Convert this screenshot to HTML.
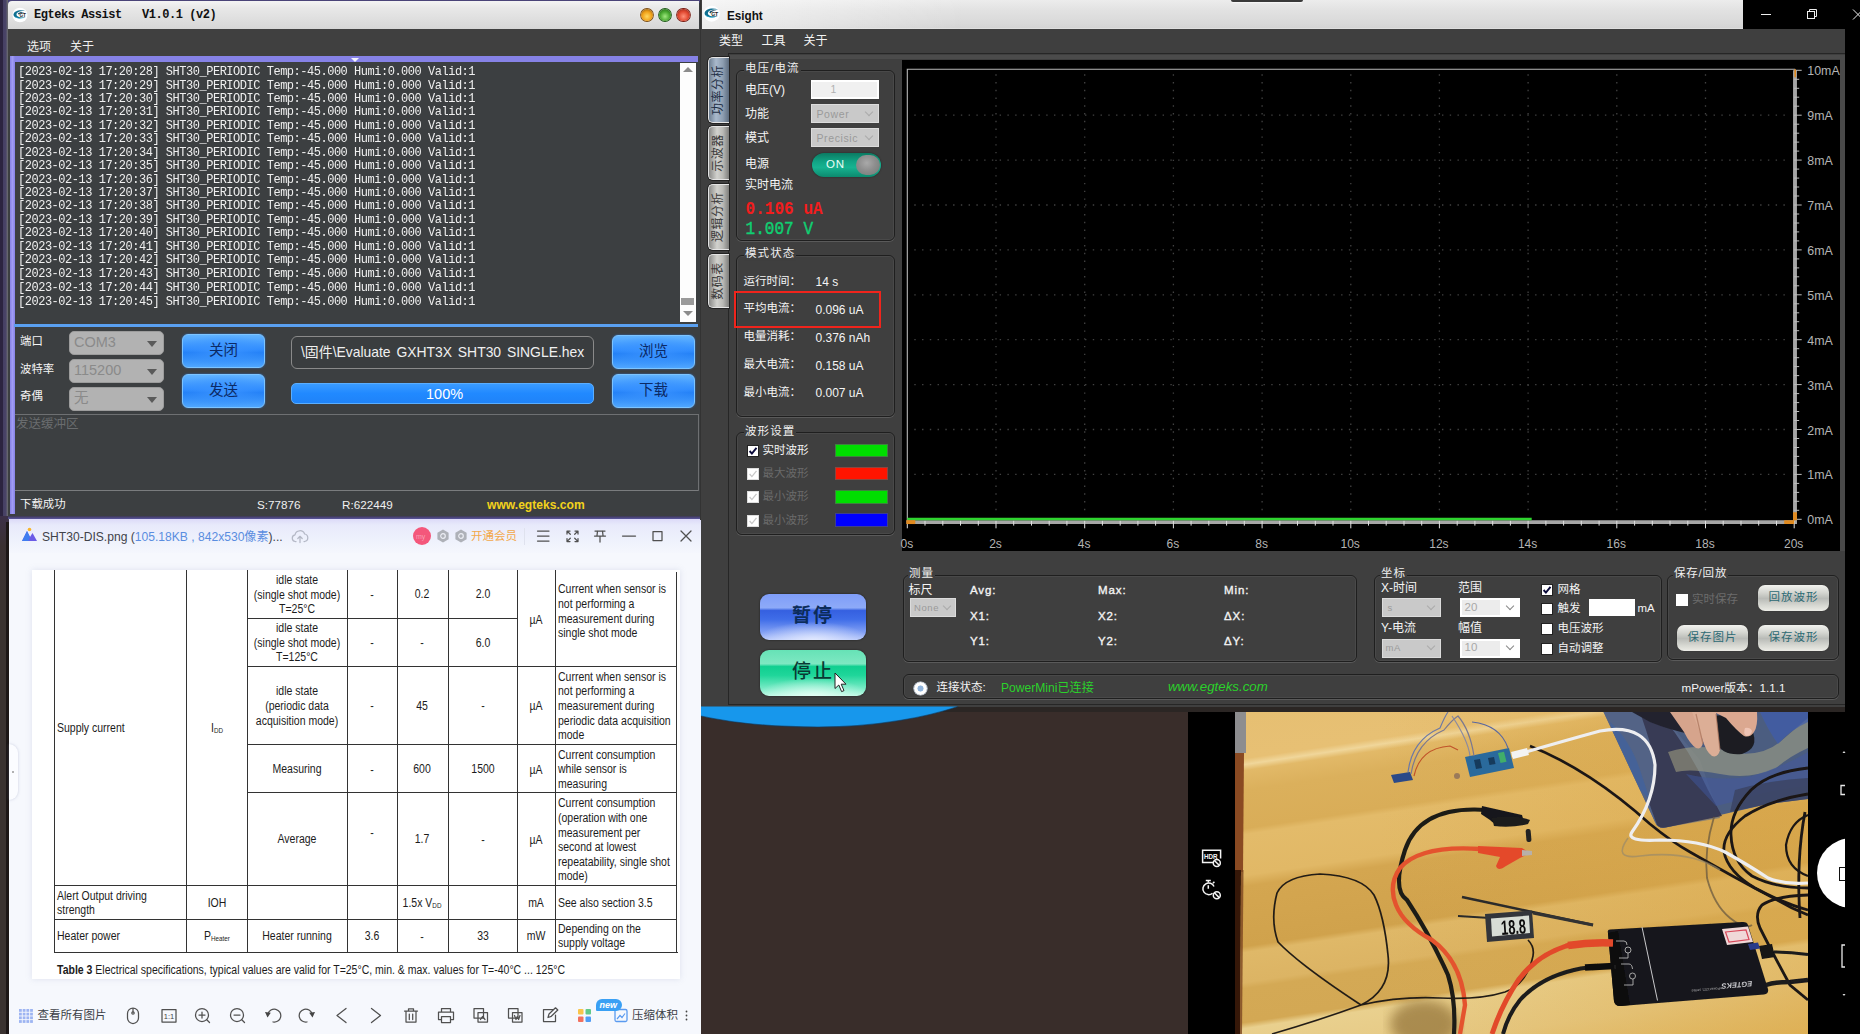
<!DOCTYPE html>
<html lang="zh"><head><meta charset="utf-8"><title>Egteks Esight</title>
<style>
*{box-sizing:border-box;margin:0;padding:0}
html,body{width:1860px;height:1034px;overflow:hidden;background:#000}
body{position:relative;font-family:"Liberation Sans","Noto Sans CJK SC",sans-serif;font-size:12px;color:#e8e8e8}
.a{position:absolute}
.t{position:absolute;white-space:nowrap;line-height:1;transform:translateY(-50%)}
.mono{font-family:"Liberation Mono","Noto Sans CJK SC",monospace}
svg{position:absolute;overflow:visible}
/* Egteks */
.cmb{position:absolute;background:#b2b2b2;border-radius:5px;color:#8a8a8a;font-size:14.5px;border:1px solid #9c9c9c}
.cmb span{position:absolute;left:4px;top:50%;transform:translateY(-52%);line-height:1}
.cmb i{position:absolute;right:6px;top:50%;margin-top:-2px;border:5px solid transparent;border-top:6px solid #5a5a5a;border-bottom:0}
.bbtn{position:absolute;border-radius:6px;border:1.5px solid #7cc4ff;color:#0b2a66;font-size:14.5px;text-align:center;
 background:radial-gradient(ellipse 60% 50% at 50% 50%,#3a93ff 0%,rgba(58,147,255,0) 100%),linear-gradient(180deg,#62b4ff 0%,#2f8cff 45%,#1f7df5 55%,#4fa6ff 100%);box-shadow:0 0 2px #2a6fd0}
.bbtn span{position:absolute;left:0;right:0;top:50%;transform:translateY(-54%);line-height:1}
/* Esight */
.gb{position:absolute;border:1.5px solid #1f1f1f;border-radius:6px;box-shadow:inset 0 0 0 0.5px #555, 0 1px 0 #5a5a5a}
.gt{position:absolute;white-space:nowrap;line-height:1;transform:translateY(-50%);background:#3f3f3f;padding:0 1px;color:#f0f0f0;font-size:11.5px;letter-spacing:1.1px}
.ecmb{position:absolute;background:#c9c9c9;border:1px solid #dcdcdc;color:#9a9a9a;font-size:10.5px}
.ecmb span{position:absolute;left:5px;top:50%;transform:translateY(-50%);line-height:1;letter-spacing:0.6px}
.ecmb b{position:absolute;right:6px;top:50%;width:6px;height:6px;margin-top:-5px;border-right:1px solid #aaa;border-bottom:1px solid #aaa;transform:rotate(45deg)}
.wcmb{position:absolute;background:#fff;border:1px solid #fff;color:#a8a8a8;font-size:11.5px}
.wcmb u{position:absolute;left:1px;top:1px;bottom:1px;width:38px;background:#ececec}
.wcmb span{position:absolute;left:4px;top:50%;transform:translateY(-56%);line-height:1;text-decoration:none}
.wcmb b{position:absolute;right:6px;top:50%;width:6px;height:6px;margin-top:-5px;border-right:1px solid #888;border-bottom:1px solid #888;transform:rotate(45deg)}
.ck{position:absolute;width:12px;height:12px;background:#fff;border:1px solid #222}
.ck.dis{border-color:#ddd}
.gbtn{position:absolute;border-radius:7px;color:#2d6a74;font-size:11.5px;text-align:center;letter-spacing:1px;
 background:linear-gradient(180deg,#f2f2ee 0%,#d4d5d0 30%,#b9bbb7 52%,#d8d9d3 80%,#ecece6 100%);box-shadow:0 0 1px #222}
.gbtn span{position:absolute;left:0;right:0;top:50%;transform:translateY(-55%);line-height:1}
</style></head><body>

<!-- p1_egteks -->
<div class="a" style="left:0;top:0;width:9px;height:520px;background:linear-gradient(90deg,#2c2440 0,#2c2440 3px,#464064 3.5px,#4a4468 6.3px,#66666e 6.8px,#66666e 8px,#333 8.2px)"></div>
<div class="a" style="left:0;top:516px;width:9px;height:518px;background:linear-gradient(180deg,#3c3048 0,#3a3032 30px,#3a3230 80px)"></div><div class="a" style="left:6px;top:522px;width:3px;height:512px;background:#1c1616"></div>
<div class="a" style="left:8px;top:0;width:693px;height:520px;background:#3c3f41"></div><div class="a" style="left:8px;top:0;width:692px;height:3px;background:#4a4478"></div>
<div class="a" style="left:8px;top:1px;width:691px;height:28px;border-radius:4px 0 0 0;background:linear-gradient(180deg,#f4f4f4 0%,#e8e8e8 25%,#e0e0e0 60%,#d6d6d6 100%)"></div>
<svg style="left:12.2px;top:6.5px" width="16.5" height="16.5" viewBox="703 5 18 18"><ellipse cx="711.7" cy="13.7" rx="8.2" ry="8" fill="#fdfeff"/><path d="M718.2 9.6 C712 7 705 9.2 704.6 13.3 C704.6 17 711 19 717.8 15.9 C712 17.2 707.9 15.6 707.9 13.2 C707.9 10.6 712.5 9 718.2 9.6 Z" fill="#0f6f90"/><path d="M717 16.6 C711.5 18.9 706.2 17.2 705.2 14.6 C707.2 17 712 17.8 717 16.6 Z" fill="#38c8f0"/><path d="M709.2 12.2 C710.5 10.6 713.5 10 716.5 10.6 C713.8 10.9 711.5 11.6 710.6 13.4 Z" fill="#1a4f6e"/><text x="711.3" y="15.6" font-size="5.2" font-weight="700" fill="#1c1c22" font-family="Liberation Sans,sans-serif" letter-spacing="-0.3">GT</text></svg>
<div class="t mono" style="left:34px;top:14.5px;font-size:12px;font-weight:700;color:#111;letter-spacing:-0.45px;white-space:pre">Egteks Assist   V1.0.1 (v2)</div>
<div class="a" style="left:640.5px;top:8.8px;width:12.4px;height:12.4px;border-radius:50%;background:radial-gradient(circle at 50% 62%,#ffd860 0%,#f0a018 50%,#7a4a10 100%);box-shadow:0 0 0 0.9px #7a4a10, 0 0 2px 1px rgba(255,255,255,.6)"></div>
<div class="a" style="left:659.0px;top:8.8px;width:12.4px;height:12.4px;border-radius:50%;background:radial-gradient(circle at 50% 62%,#a0e880 0%,#48a830 50%,#1f5a18 100%);box-shadow:0 0 0 0.9px #1f5a18, 0 0 2px 1px rgba(255,255,255,.6)"></div>
<div class="a" style="left:677.4px;top:8.8px;width:12.4px;height:12.4px;border-radius:50%;background:radial-gradient(circle at 50% 62%,#ff9078 0%,#e04830 50%,#7a2018 100%);box-shadow:0 0 0 0.9px #7a2018, 0 0 2px 1px rgba(255,255,255,.6)"></div>
<div class="a" style="left:8px;top:29px;width:692px;height:489px;background:#3c3f41"></div><div class="a" style="left:8px;top:29px;width:692px;height:27px;background:#404040"></div>
<div class="t" style="left:27px;top:46.5px;font-size:12px;color:#f0f0f0">选项</div>
<div class="t" style="left:70px;top:46.5px;font-size:12px;color:#f0f0f0">关于</div>
<div class="a" style="left:10px;top:56px;width:688px;height:6px;background:#8682e6"></div>
<div class="a" style="left:10px;top:56px;width:4.6px;height:457.5px;background:linear-gradient(90deg,#8682e6,#a09cf4 50%,#8682e6)"></div>
<div class="a" style="left:351px;top:58px;width:0;height:0;border:4px solid transparent;border-top:4px solid #f4f4ff;border-bottom:0"></div>
<div class="a mono" style="left:18px;top:65.1px;font-size:12px;line-height:12.03px;letter-spacing:-0.48px;color:#f0f0f0;white-space:pre;transform-origin:0 0;transform:scaleY(1.12)">[2023-02-13 17:20:28] SHT30_PERIODIC Temp:-45.000 Humi:0.000 Valid:1
[2023-02-13 17:20:29] SHT30_PERIODIC Temp:-45.000 Humi:0.000 Valid:1
[2023-02-13 17:20:30] SHT30_PERIODIC Temp:-45.000 Humi:0.000 Valid:1
[2023-02-13 17:20:31] SHT30_PERIODIC Temp:-45.000 Humi:0.000 Valid:1
[2023-02-13 17:20:32] SHT30_PERIODIC Temp:-45.000 Humi:0.000 Valid:1
[2023-02-13 17:20:33] SHT30_PERIODIC Temp:-45.000 Humi:0.000 Valid:1
[2023-02-13 17:20:34] SHT30_PERIODIC Temp:-45.000 Humi:0.000 Valid:1
[2023-02-13 17:20:35] SHT30_PERIODIC Temp:-45.000 Humi:0.000 Valid:1
[2023-02-13 17:20:36] SHT30_PERIODIC Temp:-45.000 Humi:0.000 Valid:1
[2023-02-13 17:20:37] SHT30_PERIODIC Temp:-45.000 Humi:0.000 Valid:1
[2023-02-13 17:20:38] SHT30_PERIODIC Temp:-45.000 Humi:0.000 Valid:1
[2023-02-13 17:20:39] SHT30_PERIODIC Temp:-45.000 Humi:0.000 Valid:1
[2023-02-13 17:20:40] SHT30_PERIODIC Temp:-45.000 Humi:0.000 Valid:1
[2023-02-13 17:20:41] SHT30_PERIODIC Temp:-45.000 Humi:0.000 Valid:1
[2023-02-13 17:20:42] SHT30_PERIODIC Temp:-45.000 Humi:0.000 Valid:1
[2023-02-13 17:20:43] SHT30_PERIODIC Temp:-45.000 Humi:0.000 Valid:1
[2023-02-13 17:20:44] SHT30_PERIODIC Temp:-45.000 Humi:0.000 Valid:1
[2023-02-13 17:20:45] SHT30_PERIODIC Temp:-45.000 Humi:0.000 Valid:1</div>
<div class="a" style="left:679.5px;top:63px;width:16.5px;height:259px;background:#fdfdfd"></div>
<div class="a" style="left:682.5px;top:67px;width:0;height:0;border:5px solid transparent;border-bottom:5px solid #8c8c8c;border-top:0"></div>
<div class="a" style="left:681px;top:298px;width:13px;height:7px;background:#9a9a9a"></div>
<div class="a" style="left:682.5px;top:311px;width:0;height:0;border:5px solid transparent;border-top:5px solid #8c8c8c;border-bottom:0"></div>
<div class="a" style="left:14px;top:324px;width:684px;height:3px;background:#5aa0f0"></div>
<div class="t" style="left:20px;top:342px;font-size:11.4px;color:#f4f4f4">端口</div>
<div class="t" style="left:20px;top:369.5px;font-size:11.4px;color:#f4f4f4">波特率</div>
<div class="t" style="left:20px;top:396.5px;font-size:11.4px;color:#f4f4f4">奇偶</div>
<div class="cmb" style="left:69px;top:331px;width:95px;height:24px"><span>COM3</span><i></i></div>
<div class="cmb" style="left:69px;top:359px;width:95px;height:24px"><span>115200</span><i></i></div>
<div class="cmb" style="left:69px;top:386.5px;width:95px;height:24px"><span>无</span><i></i></div>
<div class="bbtn" style="left:182px;top:334px;width:83px;height:33.5px"><span>关闭</span></div>
<div class="bbtn" style="left:182px;top:374px;width:83px;height:33.5px"><span>发送</span></div>
<div class="bbtn" style="left:612px;top:335px;width:83px;height:33.5px"><span>浏览</span></div>
<div class="bbtn" style="left:612px;top:374px;width:83px;height:33.5px"><span>下载</span></div>
<div class="a" style="left:291px;top:336px;width:303px;height:33px;border:1px solid #8a8a8a;border-radius:6px;background:#3a3d3f"></div>
<div class="t" style="left:301px;top:352.5px;font-size:13.9px;color:#f0f0f0;word-spacing:2px">\固件\Evaluate GXHT3X SHT30 SINGLE.hex</div>
<div class="a" style="left:291px;top:382.5px;width:303px;height:21.5px;border-radius:5px;background:linear-gradient(180deg,#3a9bff,#2189ff 50%,#1f83f8);border:1px solid #5aaeff"></div>
<div class="t" style="left:426px;top:394px;font-size:14.5px;color:#fff">100%</div>
<div class="a" style="left:15px;top:414px;width:683px;height:1px;background:#6e7072"></div>
<div class="t" style="left:16px;top:423.5px;font-size:12.5px;color:#6a6d6f">发送缓冲区</div>
<div class="a" style="left:15px;top:490px;width:683px;height:1px;background:#7a7c7e"></div>
<div class="a" style="left:698px;top:414px;width:1px;height:77px;background:#6e7072"></div>
<div class="t" style="left:20px;top:504.5px;font-size:11.4px;color:#f4f4f4">下载成功</div>
<div class="t" style="left:257px;top:504.5px;font-size:11.7px;color:#f0f0f0">S:77876</div>
<div class="t" style="left:342px;top:504.5px;font-size:11.7px;color:#f0f0f0">R:622449</div>
<div class="t" style="left:487px;top:504.5px;font-size:12.1px;font-weight:700;color:#f2d21c">www.egteks.com</div>
<!-- p2_viewer -->
<style>
.tc{position:absolute;white-space:nowrap;line-height:1;font-size:12.5px;color:#1c1c1c;transform:translate(-50%,-50%) scaleX(.84)}
.tl{position:absolute;white-space:nowrap;line-height:1;font-size:12.5px;color:#1c1c1c;transform-origin:0 50%;transform:translateY(-50%) scaleX(.84)}
.vl{position:absolute;width:1px;background:#333}
.hl{position:absolute;height:1px;background:#333}
.ic{stroke:#505050;stroke-width:1.25;fill:none;stroke-linecap:round;stroke-linejoin:round}
</style>
<div class="a" style="left:9px;top:519px;width:692px;height:515px;background:#f6f8fd"></div>
<div class="a" style="left:9px;top:519px;width:692px;height:34px;background:linear-gradient(180deg,#dcdaf8 0%,#e8eafb 18%,#eef1fc 60%,#f5f7fd 100%)"></div>
<div class="a" style="left:8px;top:516px;width:692px;height:3px;background:linear-gradient(180deg,#3c3850,#5a55a0)"></div>
<svg style="left:21px;top:527px" width="17" height="16" viewBox="0 0 17 16"><path d="M1 14 L6 4 L9 10 L11.5 6 L16 14 Z" fill="#6b5be6"/><path d="M6 4 L9 10 L7.5 14 L1 14 Z" fill="#3f7df0"/><circle cx="8.5" cy="2.5" r="1.8" fill="#f9b52c"/></svg>
<div class="t" style="left:42px;top:536.5px;font-size:12.1px;color:#3f424a">SHT30-DIS.png (<span style="color:#5a8de0">105.18KB , 842x530像素</span>)...</div>
<svg style="left:291px;top:528px" width="18" height="16" viewBox="0 0 18 16"><path class="ic" style="stroke:#b4b8c6" d="M5 13.5 H4.2 A3.4 3.4 0 0 1 4 6.8 A5 5 0 0 1 13.6 6 A3.8 3.8 0 0 1 13.6 13.5 H13"/><path class="ic" style="stroke:#b4b8c6" d="M9 14.5 V8.5 M6.8 10.5 L9 8.3 L11.2 10.5"/></svg>
<div class="a" style="left:412.5px;top:526.5px;width:18.5px;height:18.5px;border-radius:50%;background:#f4577b"></div>
<div class="t" style="left:416px;top:536px;font-size:7px;color:#f9a0b4">my</div>
<svg style="left:436.3px;top:529px" width="14" height="14" viewBox="0 0 14 14"><path d="M7 0.5 L12.6 3.7 V10.3 L7 13.5 L1.4 10.3 V3.7 Z" fill="#aeb1b8"/><circle cx="7" cy="7" r="2.3" fill="none" stroke="#eceef4" stroke-width="1.2"/></svg>
<svg style="left:454.3px;top:529px" width="14" height="14" viewBox="0 0 14 14"><path d="M7 0.5 L12.6 3.7 V10.3 L7 13.5 L1.4 10.3 V3.7 Z" fill="#aeb1b8"/><circle cx="7" cy="7" r="2.3" fill="none" stroke="#eceef4" stroke-width="1.2"/></svg>
<div class="t" style="left:471px;top:536.5px;font-size:11.5px;color:#f3a84a">开通会员</div>
<div class="a" style="left:524px;top:528px;width:1px;height:17px;background:#dfe2ee"></div>
<svg style="left:535px;top:528px" width="160" height="18" viewBox="535 528 160 18"><path class="ic" d="M537.5 531 H549 M537.5 536 H549 M537.5 541 H549"/><path class="ic" d="M567 534 V531 H570 M575 531 H578 V534 M578 538.5 V541.5 H575 M570 541.5 H567 V538.5 M567.4 531.4 L570.3 534.3 M577.6 531.4 L574.7 534.3 M577.6 541.1 L574.7 538.2 M567.4 541.1 L570.3 538.2"/><path class="ic" d="M595 531 H605 M597.5 531 L597 535.5 M602.5 531 L603 535.5 M594.5 536 H605.5 M600 536 V542"/><path class="ic" d="M622.5 536 H635.5"/><rect class="ic" x="653" y="531.5" width="9" height="9"/><path class="ic" d="M681 531 L691 541 M691 531 L681 541"/></svg>
<div class="a" style="left:32px;top:569.5px;width:648px;height:409px;background:#fff;box-shadow:0 0 6px rgba(150,160,190,.25)"></div>
<div class="vl" style="left:54px;top:570px;height:383px"></div>
<div class="vl" style="left:186px;top:570px;height:383px"></div>
<div class="vl" style="left:247px;top:570px;height:383px"></div>
<div class="vl" style="left:347px;top:570px;height:383px"></div>
<div class="vl" style="left:397px;top:570px;height:383px"></div>
<div class="vl" style="left:448px;top:570px;height:383px"></div>
<div class="vl" style="left:517px;top:570px;height:383px"></div>
<div class="vl" style="left:555px;top:570px;height:383px"></div>
<div class="vl" style="left:676px;top:572px;height:381px"></div>
<div class="hl" style="left:247px;top:618px;width:271px"></div>
<div class="hl" style="left:247px;top:666px;width:430px"></div>
<div class="hl" style="left:247px;top:744px;width:430px"></div>
<div class="hl" style="left:247px;top:792px;width:430px"></div>
<div class="hl" style="left:55px;top:885px;width:622px"></div>
<div class="hl" style="left:55px;top:919px;width:622px"></div>
<div class="hl" style="left:55px;top:952px;width:623px"></div>
<div class="tl" style="left:56.5px;top:727.5px;">Supply current</div>
<div class="tc" style="left:216.5px;top:727.5px;">I<span style="font-size:7.5px;vertical-align:-1px">DD</span></div>
<div class="tl" style="left:56.5px;top:895.5px;">Alert Output driving</div>
<div class="tl" style="left:56.5px;top:910px;">strength</div>
<div class="tc" style="left:216.5px;top:902.5px;">IOH</div>
<div class="tl" style="left:56.5px;top:936.3px;">Heater power</div>
<div class="tc" style="left:216.5px;top:936.3px;">P<span style="font-size:7.5px;vertical-align:-1px">Heater</span></div>
<div class="tc" style="left:296.8px;top:580px;">idle state</div>
<div class="tc" style="left:296.8px;top:594.5px;">(single shot mode)</div>
<div class="tc" style="left:296.8px;top:608.8px;">T=25°C</div>
<div class="tc" style="left:296.8px;top:628px;">idle state</div>
<div class="tc" style="left:296.8px;top:642.5px;">(single shot mode)</div>
<div class="tc" style="left:296.8px;top:657px;">T=125°C</div>
<div class="tc" style="left:296.8px;top:691px;">idle state</div>
<div class="tc" style="left:296.8px;top:705.7px;">(periodic data</div>
<div class="tc" style="left:296.8px;top:720.5px;">acquisition mode)</div>
<div class="tc" style="left:296.8px;top:769.2px;">Measuring</div>
<div class="tc" style="left:296.8px;top:839.2px;">Average</div>
<div class="tc" style="left:296.8px;top:936.3px;">Heater running</div>
<div class="tc" style="left:372px;top:595px;">-</div>
<div class="tc" style="left:372px;top:643px;">-</div>
<div class="tc" style="left:372px;top:706px;">-</div>
<div class="tc" style="left:372px;top:770px;">-</div>
<div class="tc" style="left:372px;top:833px;">-</div>
<div class="tc" style="left:372px;top:936.3px;">3.6</div>
<div class="tc" style="left:422px;top:594.3px;">0.2</div>
<div class="tc" style="left:422px;top:643px;">-</div>
<div class="tc" style="left:422px;top:705.7px;">45</div>
<div class="tc" style="left:422px;top:769.2px;">600</div>
<div class="tc" style="left:422px;top:839.2px;">1.7</div>
<div class="tc" style="left:422px;top:902.5px;">1.5x V<span style="font-size:7.5px;vertical-align:-1px">DD</span></div>
<div class="tc" style="left:422px;top:937px;">-</div>
<div class="tc" style="left:482.5px;top:594.3px;">2.0</div>
<div class="tc" style="left:482.5px;top:642.5px;">6.0</div>
<div class="tc" style="left:482.5px;top:706px;">-</div>
<div class="tc" style="left:482.5px;top:769.2px;">1500</div>
<div class="tc" style="left:482.5px;top:840px;">-</div>
<div class="tc" style="left:482.5px;top:936.3px;">33</div>
<div class="tc" style="left:536.3px;top:619.5px;">µA</div>
<div class="tc" style="left:536.3px;top:705.7px;">µA</div>
<div class="tc" style="left:536.3px;top:770px;">µA</div>
<div class="tc" style="left:536.3px;top:840px;">µA</div>
<div class="tc" style="left:536.3px;top:902.5px;">mA</div>
<div class="tc" style="left:536.3px;top:936.3px;">mW</div>
<div class="tl" style="left:557.5px;top:589px;">Current when sensor is</div>
<div class="tl" style="left:557.5px;top:604px;">not performing a</div>
<div class="tl" style="left:557.5px;top:619px;">measurement during</div>
<div class="tl" style="left:557.5px;top:633.3px;">single shot mode</div>
<div class="tl" style="left:557.5px;top:676.7px;">Current when sensor is</div>
<div class="tl" style="left:557.5px;top:691.3px;">not performing a</div>
<div class="tl" style="left:557.5px;top:705.8px;">measurement during</div>
<div class="tl" style="left:557.5px;top:720.5px;">periodic data acquisition</div>
<div class="tl" style="left:557.5px;top:735px;">mode</div>
<div class="tl" style="left:557.5px;top:754.5px;">Current consumption</div>
<div class="tl" style="left:557.5px;top:769.2px;">while sensor is</div>
<div class="tl" style="left:557.5px;top:784px;">measuring</div>
<div class="tl" style="left:557.5px;top:803.2px;">Current consumption</div>
<div class="tl" style="left:557.5px;top:818px;">(operation with one</div>
<div class="tl" style="left:557.5px;top:832.5px;">measurement per</div>
<div class="tl" style="left:557.5px;top:847px;">second at lowest</div>
<div class="tl" style="left:557.5px;top:861.7px;">repeatability, single shot</div>
<div class="tl" style="left:557.5px;top:876.3px;">mode)</div>
<div class="tl" style="left:557.5px;top:902.5px;">See also section 3.5</div>
<div class="tl" style="left:557.5px;top:928.7px;">Depending on the</div>
<div class="tl" style="left:557.5px;top:943.2px;">supply voltage</div>
<div class="tl" style="left:57px;top:970px;"><b>Table 3</b> Electrical specifications, typical values are valid for T=25°C, min. &amp; max. values for T=-40°C ... 125°C</div>
<svg style="left:18px;top:1008px" width="16" height="16" viewBox="0 0 16 16"><g fill="#9db4f2"><rect x="1.0" y="1.0" width="2.8" height="2.8"/><rect x="1.0" y="4.7" width="2.8" height="2.8"/><rect x="1.0" y="8.4" width="2.8" height="2.8"/><rect x="1.0" y="12.100000000000001" width="2.8" height="2.8"/><rect x="4.7" y="1.0" width="2.8" height="2.8"/><rect x="4.7" y="4.7" width="2.8" height="2.8"/><rect x="4.7" y="8.4" width="2.8" height="2.8"/><rect x="4.7" y="12.100000000000001" width="2.8" height="2.8"/><rect x="8.4" y="1.0" width="2.8" height="2.8"/><rect x="8.4" y="4.7" width="2.8" height="2.8"/><rect x="8.4" y="8.4" width="2.8" height="2.8"/><rect x="8.4" y="12.100000000000001" width="2.8" height="2.8"/><rect x="12.100000000000001" y="1.0" width="2.8" height="2.8"/><rect x="12.100000000000001" y="4.7" width="2.8" height="2.8"/><rect x="12.100000000000001" y="8.4" width="2.8" height="2.8"/><rect x="12.100000000000001" y="12.100000000000001" width="2.8" height="2.8"/></g></svg>
<div class="t" style="left:37.5px;top:1016px;font-size:11.5px;color:#3c3f46">查看所有图片</div>
<svg style="left:120px;top:1004px" width="580" height="24" viewBox="120 1004 580 24"><rect class="ic" x="127.5" y="1008" width="11" height="15.5" rx="5.5"/><circle class="ic" cx="133" cy="1013" r="1.2"/><path class="ic" d="M133 1008.5 V1011.8"/><rect class="ic" x="162" y="1009.5" width="14" height="12.5"/><text x="169" y="1019.2" font-size="7.5" text-anchor="middle" fill="#444" font-family="Liberation Sans,sans-serif">1:1</text><circle class="ic" cx="202" cy="1015" r="6.5"/><path class="ic" d="M199 1015 H205 M202 1012 V1018 M206.8 1019.8 L209.5 1022.5"/><circle class="ic" cx="237" cy="1015" r="6.5"/><path class="ic" d="M234 1015 H240 M241.8 1019.8 L244.5 1022.5"/><path class="ic" d="M268 1014 A6.5 6.5 0 1 1 273 1022"/><path d="M265 1012 L270.8 1012.8 L267.5 1017.5 Z" fill="#444"/><path class="ic" d="M312 1014 A6.5 6.5 0 1 0 307 1022"/><path d="M315 1012 L309.2 1012.8 L312.5 1017.5 Z" fill="#444"/><path class="ic" d="M346 1008.5 L337 1015.5 L346 1022.5"/><path class="ic" d="M371.5 1008.5 L380.5 1015.5 L371.5 1022.5"/><path class="ic" d="M404.5 1011 H417.5 M408.5 1011 V1008.8 H413.5 V1011 M406 1011 V1022 H416 V1011 M409.3 1014 V1019.5 M412.7 1014 V1019.5"/><path class="ic" d="M441.5 1012 V1008.5 H450.5 V1012 M441.5 1019.5 H438.5 V1012 H453.5 V1019.5 H450.5 M441.5 1016.5 H450.5 V1022.5 H441.5 Z"/><rect class="ic" x="474" y="1008.5" width="9.5" height="9.5"/><rect class="ic" x="478" y="1012.5" width="9.5" height="9.5"/><path class="ic" d="M480.5 1019.5 L482.5 1016.5 L485 1019.5"/><rect class="ic" x="508.5" y="1008.5" width="9.5" height="9.5"/><rect class="ic" x="512.5" y="1012.5" width="9.5" height="9.5"/><path class="ic" d="M514.5 1015.5 L516 1019.5 L517.3 1016.5 L518.6 1019.5 L520 1015.5"/><path class="ic" d="M553 1009.5 H543.5 V1021.5 H555.5 V1015"/><path class="ic" d="M548 1017.5 L549 1014 L555.5 1007.8 L557.8 1010 L551.3 1016.3 Z"/><rect x="578" y="1009" width="5.5" height="5.5" rx="1" fill="#f9c54a"/><rect x="585.5" y="1009" width="5.5" height="5.5" rx="1" fill="#62c98a"/><rect x="578" y="1016.5" width="5.5" height="5.5" rx="1" fill="#f2705e"/><rect x="585.5" y="1016.5" width="5.5" height="5.5" rx="1" fill="#4f9cf5"/><rect x="615" y="1009.5" width="12" height="12" rx="1.5" fill="none" stroke="#5a9af0" stroke-width="1.3"/><path d="M617 1019 L620 1015.5 L622 1017.5 L625 1013.5" fill="none" stroke="#5a9af0" stroke-width="1.2"/><circle cx="686.5" cy="1011.5" r="0.9" fill="#444"/><circle cx="686.5" cy="1015.5" r="0.9" fill="#444"/><circle cx="686.5" cy="1019.5" r="0.9" fill="#444"/></svg>
<div class="a" style="left:596px;top:999px;width:26px;height:12px;border-radius:6px 6px 6px 1px;background:#3aa0f4"></div>
<div class="t" style="left:599.5px;top:1004.5px;font-size:9px;color:#fff;font-style:italic;font-weight:700">new</div>
<div class="t" style="left:632px;top:1016px;font-size:11.5px;color:#3c3f46">压缩体积</div>
<div class="a" style="left:9px;top:744px;width:9px;height:56px;border-radius:0 9px 9px 0;background:#fbfcff;box-shadow:0 0 3px rgba(120,130,170,.35)"></div><div class="a" style="left:12px;top:771px;width:2px;height:2px;border-radius:50%;background:#999"></div>
<!-- p3_esight -->
<div class="a" style="left:699.5px;top:0;width:2px;height:520px;background:#333"></div>
<div class="a" style="left:701px;top:0;width:1144px;height:707px;background:#3f3f3f"></div>
<div class="a" style="left:701.5px;top:0;width:1042.5px;height:29px;background:linear-gradient(90deg,rgba(255,255,255,.55) 0,rgba(255,255,255,0) 260px),linear-gradient(180deg,#ececec 0%,#e2e2e2 35%,#d9d9d9 80%,#d4d4d4 96%,#e6e6e6 100%)"></div>
<div class="a" style="left:1743px;top:0;width:117px;height:29px;background:#000"></div>
<div class="a" style="left:1230.5px;top:0;width:72.5px;height:1.9px;background:#3a3a3a;border-radius:0 0 2px 2px;box-shadow:0 1px 1.5px rgba(255,255,255,.7)"></div>
<svg style="left:703px;top:5px" width="18" height="18" viewBox="703 5 18 18"><ellipse cx="711.7" cy="13.7" rx="8.2" ry="8" fill="#fdfeff"/><path d="M718.2 9.6 C712 7 705 9.2 704.6 13.3 C704.6 17 711 19 717.8 15.9 C712 17.2 707.9 15.6 707.9 13.2 C707.9 10.6 712.5 9 718.2 9.6 Z" fill="#0f6f90"/><path d="M717 16.6 C711.5 18.9 706.2 17.2 705.2 14.6 C707.2 17 712 17.8 717 16.6 Z" fill="#38c8f0"/><path d="M709.2 12.2 C710.5 10.6 713.5 10 716.5 10.6 C713.8 10.9 711.5 11.6 710.6 13.4 Z" fill="#1a4f6e"/><text x="711.3" y="15.6" font-size="5.2" font-weight="700" fill="#1c1c22" font-family="Liberation Sans,sans-serif" letter-spacing="-0.3">GT</text></svg>
<div class="t" style="left:726.6px;top:14.7px;font-size:13px;font-weight:700;color:#111;transform-origin:0 50%;transform:translateY(-50%) scaleX(.9)">Esight</div>
<svg style="left:1750px;top:0" width="110" height="29" viewBox="1750 0 110 29"><path d="M1761 14.5 H1771" stroke="#eee" stroke-width="1"/><rect x="1807.5" y="11.5" width="7" height="7" fill="none" stroke="#eee" stroke-width="1"/><path d="M1809.5 11.5 V9.5 H1816.5 V16.5 H1814.5" fill="none" stroke="#eee" stroke-width="1"/><path d="M1853 9.5 L1863 19.5 M1863 9.5 L1853 19.5" stroke="#eee" stroke-width="1"/></svg>
<div class="t" style="left:719px;top:41px;font-size:12px;color:#f4f4f4">类型</div>
<div class="t" style="left:761.5px;top:41px;font-size:12px;color:#f4f4f4">工具</div>
<div class="t" style="left:803.5px;top:41px;font-size:12px;color:#f4f4f4">关于</div>
<div class="a" style="left:728px;top:53px;width:1117px;height:652px;border-left:1.5px solid #262626;border-top:1.5px solid #262626;border-bottom:1.5px solid #262626"></div>
<div class="a" style="left:730px;top:55px;width:1115px;height:3.5px;background:#4b4b4b"></div>
<div class="a" style="left:707.5px;top:57px;width:21px;height:65.5px;border-radius:5px 0 0 5px;background:linear-gradient(90deg,#6e7f92 0%,#a9b9cc 35%,#8c9db0 70%,#5d6c7e 100%);border:1px solid #e4e4e4;border-right:0;box-shadow:0 0 0 1px #222"></div>
<div class="a" style="left:718px;top:89.75px;width:0;height:0"><div style="position:absolute;white-space:nowrap;line-height:1;font-size:12px;color:#1f2f45;transform:translate(-50%,-50%) rotate(-90deg);letter-spacing:0.5px">功率分析</div></div>
<div class="a" style="left:707.5px;top:126px;width:21px;height:54px;border-radius:5px 0 0 5px;background:linear-gradient(90deg,#8a8a88 0%,#d2d2ce 40%,#b9b9b5 70%,#7d7d7b 100%);border:1px solid #e4e4e4;border-right:0;box-shadow:0 0 0 1px #222"></div>
<div class="a" style="left:718px;top:153.0px;width:0;height:0"><div style="position:absolute;white-space:nowrap;line-height:1;font-size:12px;color:#3a3a3a;transform:translate(-50%,-50%) rotate(-90deg);letter-spacing:0.5px">示波器</div></div>
<div class="a" style="left:707.5px;top:184px;width:21px;height:66px;border-radius:5px 0 0 5px;background:linear-gradient(90deg,#8a8a88 0%,#d2d2ce 40%,#b9b9b5 70%,#7d7d7b 100%);border:1px solid #e4e4e4;border-right:0;box-shadow:0 0 0 1px #222"></div>
<div class="a" style="left:718px;top:217.0px;width:0;height:0"><div style="position:absolute;white-space:nowrap;line-height:1;font-size:12px;color:#3a3a3a;transform:translate(-50%,-50%) rotate(-90deg);letter-spacing:0.5px">逻辑分析</div></div>
<div class="a" style="left:707.5px;top:253.5px;width:21px;height:54.0px;border-radius:5px 0 0 5px;background:linear-gradient(90deg,#8a8a88 0%,#d2d2ce 40%,#b9b9b5 70%,#7d7d7b 100%);border:1px solid #e4e4e4;border-right:0;box-shadow:0 0 0 1px #222"></div>
<div class="a" style="left:718px;top:280.5px;width:0;height:0"><div style="position:absolute;white-space:nowrap;line-height:1;font-size:12px;color:#3a3a3a;transform:translate(-50%,-50%) rotate(-90deg);letter-spacing:0.5px">数码表</div></div>
<div class="gb" style="left:735.5px;top:69.5px;width:159px;height:171px"></div>
<div class="gt" style="left:744px;top:69px">电压/电流</div>
<div class="t" style="left:745px;top:90px;font-size:12px;color:#f4f4f4">电压(V)</div>
<div class="t" style="left:745px;top:114px;font-size:12px;color:#f4f4f4">功能</div>
<div class="t" style="left:745px;top:138.3px;font-size:12px;color:#f4f4f4">模式</div>
<div class="t" style="left:745px;top:164px;font-size:12px;color:#f4f4f4">电源</div>
<div class="t" style="left:745px;top:185px;font-size:12px;color:#f4f4f4">实时电流</div>
<div class="a" style="left:810.5px;top:80px;width:68px;height:19px;background:#fff"></div><div class="a" style="left:812px;top:82px;width:65px;height:15px;background:#f0f0f0"></div>
<div class="t" style="left:830.5px;top:89px;font-size:10.5px;color:#b0b0b0">1</div>
<div class="ecmb" style="left:810.5px;top:104px;width:68px;height:19px"><span>Power</span><b></b></div>
<div class="ecmb" style="left:810.5px;top:128px;width:68px;height:19px"><span>Precisic</span><b></b></div>
<div class="a" style="left:811.5px;top:153px;width:69.5px;height:23.5px;border-radius:12px;background:linear-gradient(180deg,#0b7a62 0%,#11a384 35%,#17b391 60%,#0c8a6e 100%);box-shadow:0 0 1.5px #1a1a1a"></div>
<div class="a" style="left:856px;top:154.5px;width:24px;height:20.5px;border-radius:11px;background:radial-gradient(ellipse at 45% 40%,#a9a9a9 0%,#8e8e8e 45%,#6f7a76 100%)"></div>
<div class="t" style="left:826px;top:165px;font-size:11.5px;color:#eafff8;letter-spacing:0.8px">ON</div>
<div class="t mono" style="left:745.5px;top:209.5px;font-size:16px;font-weight:700;color:#f21d1d;letter-spacing:0.05px;white-space:pre;transform:translateY(-50%) scaleY(1.12)">0.106 uA</div>
<div class="t mono" style="left:745.5px;top:229.5px;font-size:16px;font-weight:400;color:#10cf72;letter-spacing:0.05px;white-space:pre;transform:translateY(-50%) scaleY(1.12);-webkit-text-stroke:0.4px #10cf72">1.007 V</div>
<div class="gb" style="left:735.5px;top:254.5px;width:159px;height:162.5px"></div>
<div class="gt" style="left:744px;top:254px">模式状态</div>
<div class="t" style="left:743.5px;top:281.8px;font-size:11.5px;color:#f4f4f4">运行时间：</div>
<div class="t" style="left:815.5px;top:282.2px;font-size:12px;color:#f4f4f4">14 s</div>
<div class="t" style="left:743.5px;top:309.3px;font-size:11.5px;color:#f4f4f4">平均电流：</div>
<div class="t" style="left:815.5px;top:309.7px;font-size:12px;color:#f4f4f4">0.096 uA</div>
<div class="t" style="left:743.5px;top:337.3px;font-size:11.5px;color:#f4f4f4">电量消耗：</div>
<div class="t" style="left:815.5px;top:337.7px;font-size:12px;color:#f4f4f4">0.376 nAh</div>
<div class="t" style="left:743.5px;top:365.3px;font-size:11.5px;color:#f4f4f4">最大电流：</div>
<div class="t" style="left:815.5px;top:365.7px;font-size:12px;color:#f4f4f4">0.158 uA</div>
<div class="t" style="left:743.5px;top:392.8px;font-size:11.5px;color:#f4f4f4">最小电流：</div>
<div class="t" style="left:815.5px;top:393.2px;font-size:12px;color:#f4f4f4">0.007 uA</div>
<div class="a" style="left:733.5px;top:291px;width:147.5px;height:37px;border:2.6px solid #f0241c"></div>
<div class="gb" style="left:735.5px;top:432px;width:159px;height:102.5px"></div>
<div class="gt" style="left:744px;top:431.5px">波形设置</div>
<div class="ck" style="left:746.5px;top:445px"></div>
<svg style="left:746.5px;top:445px" width="12" height="12" viewBox="0 0 12 12"><path d="M2.6 6 L4.9 8.6 L9.5 2.8" fill="none" stroke="#0a0a3a" stroke-width="1.9"/></svg>
<div class="t" style="left:762.5px;top:451px;font-size:11.5px;color:#f4f4f4">实时波形</div>
<div class="a" style="left:834.5px;top:443.7px;width:53px;height:13.5px;background:#00de00;border:1px solid rgba(90,90,90,.7)"></div>
<div class="ck dis" style="left:746.5px;top:468.2px"></div>
<svg style="left:746.5px;top:468.2px" width="12" height="12" viewBox="0 0 12 12"><path d="M2.6 6 L4.9 8.6 L9.5 2.8" fill="none" stroke="#c8c8c8" stroke-width="1.3"/></svg>
<div class="t" style="left:762.5px;top:474.2px;font-size:11.5px;color:#6a6a6a">最大波形</div>
<div class="a" style="left:834.5px;top:466.9px;width:53px;height:13.5px;background:#ff1400;border:1px solid rgba(90,90,90,.7)"></div>
<div class="ck dis" style="left:746.5px;top:491.3px"></div>
<svg style="left:746.5px;top:491.3px" width="12" height="12" viewBox="0 0 12 12"><path d="M2.6 6 L4.9 8.6 L9.5 2.8" fill="none" stroke="#c8c8c8" stroke-width="1.3"/></svg>
<div class="t" style="left:762.5px;top:497.3px;font-size:11.5px;color:#6a6a6a">最小波形</div>
<div class="a" style="left:834.5px;top:490.0px;width:53px;height:13.5px;background:#00de00;border:1px solid rgba(90,90,90,.7)"></div>
<div class="ck dis" style="left:746.5px;top:514.5px"></div>
<svg style="left:746.5px;top:514.5px" width="12" height="12" viewBox="0 0 12 12"><path d="M2.6 6 L4.9 8.6 L9.5 2.8" fill="none" stroke="#c8c8c8" stroke-width="1.3"/></svg>
<div class="t" style="left:762.5px;top:520.5px;font-size:11.5px;color:#6a6a6a">最小波形</div>
<div class="a" style="left:834.5px;top:513.2px;width:53px;height:13.5px;background:#0000ff;border:1px solid rgba(90,90,90,.7)"></div>
<div class="a" style="left:760px;top:594px;width:106px;height:46px;border-radius:9px;background:radial-gradient(ellipse 55% 45% at 50% 105%,#e6ecff 0%,rgba(230,236,255,0) 100%),linear-gradient(180deg,#7f9df8 0%,#8daaf8 30%,#3560e0 36%,#3f6de8 55%,#86a3f5 85%,#b4c6fb 100%);box-shadow:0 0 2px #1a1a1a"></div>
<div class="t" style="left:813px;top:615px;font-size:19px;font-weight:700;color:#0c2c5a;letter-spacing:2px;transform:translate(-50%,-50%)">暂停</div>
<div class="a" style="left:760px;top:650px;width:106px;height:46px;border-radius:9px;background:radial-gradient(ellipse 55% 45% at 50% 105%,#e8fff6 0%,rgba(232,255,246,0) 100%),linear-gradient(180deg,#66e2b6 0%,#7ee8c2 30%,#10cf90 36%,#1fd69a 55%,#7cecc8 85%,#b8f7e2 100%);box-shadow:0 0 2px #1a1a1a"></div>
<div class="t" style="left:813px;top:671px;font-size:19px;font-weight:500;color:#0a3a34;letter-spacing:2px;transform:translate(-50%,-50%)">停止</div>
<svg style="left:834px;top:672px" width="14" height="22" viewBox="0 0 14 22"><path d="M1 1 V16.5 L4.8 13 L7.6 19.6 L10 18.6 L7.2 12.2 H12 Z" fill="#fff" stroke="#222" stroke-width="1"/></svg>
<!-- p3b_plot -->
<div class="a" style="left:902px;top:60px;width:938px;height:490.5px;background:#000"></div>
<div class="a" style="left:1840px;top:55px;width:5px;height:496px;background:#4a4a4a"></div>
<svg style="left:0;top:0" width="1860" height="1034" viewBox="0 0 1860 1034"><g stroke="#424242" stroke-width="1.3" stroke-dasharray="1.4 6.36" fill="none"><path d="M996.0 74.3 V516.3"/><path d="M1084.7 74.3 V516.3"/><path d="M1173.4 74.3 V516.3"/><path d="M1262.1 74.3 V516.3"/><path d="M1350.8 74.3 V516.3"/><path d="M1439.4 74.3 V516.3"/><path d="M1528.1 74.3 V516.3"/><path d="M1616.8 74.3 V516.3"/><path d="M1705.5 74.3 V516.3"/><path d="M914.3 474.4 H1791.2"/><path d="M914.3 429.5 H1791.2"/><path d="M914.3 384.6 H1791.2"/><path d="M914.3 339.7 H1791.2"/><path d="M914.3 294.8 H1791.2"/><path d="M914.3 249.9 H1791.2"/><path d="M914.3 205.0 H1791.2"/><path d="M914.3 160.1 H1791.2"/><path d="M914.3 115.2 H1791.2"/></g><path d="M907.3 522.3 V69.3 H1795.2" fill="none" stroke="#b9b9b9" stroke-width="1.1"/><path d="M906.8 522.1 H1796.9" stroke="#a6a6a6" stroke-width="3.9"/><path d="M1795.0 70.3 V524.0" stroke="#a6a6a6" stroke-width="3.9"/><g stroke="#e0e0e0" stroke-width="1"><path d="M907.3 520.8 V528.3"/><path d="M925.0 520.8 V525.6"/><path d="M942.8 520.8 V525.6"/><path d="M960.5 520.8 V525.6"/><path d="M978.3 520.8 V525.6"/><path d="M996.0 520.8 V528.3"/><path d="M1013.7 520.8 V525.6"/><path d="M1031.5 520.8 V525.6"/><path d="M1049.2 520.8 V525.6"/><path d="M1066.9 520.8 V525.6"/><path d="M1084.7 520.8 V528.3"/><path d="M1102.4 520.8 V525.6"/><path d="M1120.2 520.8 V525.6"/><path d="M1137.9 520.8 V525.6"/><path d="M1155.6 520.8 V525.6"/><path d="M1173.4 520.8 V528.3"/><path d="M1191.1 520.8 V525.6"/><path d="M1208.8 520.8 V525.6"/><path d="M1226.6 520.8 V525.6"/><path d="M1244.3 520.8 V525.6"/><path d="M1262.1 520.8 V528.3"/><path d="M1279.8 520.8 V525.6"/><path d="M1297.5 520.8 V525.6"/><path d="M1315.3 520.8 V525.6"/><path d="M1333.0 520.8 V525.6"/><path d="M1350.8 520.8 V528.3"/><path d="M1368.5 520.8 V525.6"/><path d="M1386.2 520.8 V525.6"/><path d="M1404.0 520.8 V525.6"/><path d="M1421.7 520.8 V525.6"/><path d="M1439.4 520.8 V528.3"/><path d="M1457.2 520.8 V525.6"/><path d="M1474.9 520.8 V525.6"/><path d="M1492.7 520.8 V525.6"/><path d="M1510.4 520.8 V525.6"/><path d="M1528.1 520.8 V528.3"/><path d="M1545.9 520.8 V525.6"/><path d="M1563.6 520.8 V525.6"/><path d="M1581.3 520.8 V525.6"/><path d="M1599.1 520.8 V525.6"/><path d="M1616.8 520.8 V528.3"/><path d="M1634.6 520.8 V525.6"/><path d="M1652.3 520.8 V525.6"/><path d="M1670.0 520.8 V525.6"/><path d="M1687.8 520.8 V525.6"/><path d="M1705.5 520.8 V528.3"/><path d="M1723.2 520.8 V525.6"/><path d="M1741.0 520.8 V525.6"/><path d="M1758.7 520.8 V525.6"/><path d="M1776.5 520.8 V525.6"/><path d="M1794.2 520.8 V528.3"/></g><g stroke="#bdbdbd" stroke-width="1"><path d="M1794.2 519.3 H1801.7"/><path d="M1794.2 510.3 H1799.2"/><path d="M1794.2 501.3 H1799.2"/><path d="M1794.2 492.4 H1799.2"/><path d="M1794.2 483.4 H1799.2"/><path d="M1794.2 474.4 H1801.7"/><path d="M1794.2 465.4 H1799.2"/><path d="M1794.2 456.4 H1799.2"/><path d="M1794.2 447.5 H1799.2"/><path d="M1794.2 438.5 H1799.2"/><path d="M1794.2 429.5 H1801.7"/><path d="M1794.2 420.5 H1799.2"/><path d="M1794.2 411.5 H1799.2"/><path d="M1794.2 402.6 H1799.2"/><path d="M1794.2 393.6 H1799.2"/><path d="M1794.2 384.6 H1801.7"/><path d="M1794.2 375.6 H1799.2"/><path d="M1794.2 366.6 H1799.2"/><path d="M1794.2 357.7 H1799.2"/><path d="M1794.2 348.7 H1799.2"/><path d="M1794.2 339.7 H1801.7"/><path d="M1794.2 330.7 H1799.2"/><path d="M1794.2 321.7 H1799.2"/><path d="M1794.2 312.8 H1799.2"/><path d="M1794.2 303.8 H1799.2"/><path d="M1794.2 294.8 H1801.7"/><path d="M1794.2 285.8 H1799.2"/><path d="M1794.2 276.8 H1799.2"/><path d="M1794.2 267.9 H1799.2"/><path d="M1794.2 258.9 H1799.2"/><path d="M1794.2 249.9 H1801.7"/><path d="M1794.2 240.9 H1799.2"/><path d="M1794.2 231.9 H1799.2"/><path d="M1794.2 223.0 H1799.2"/><path d="M1794.2 214.0 H1799.2"/><path d="M1794.2 205.0 H1801.7"/><path d="M1794.2 196.0 H1799.2"/><path d="M1794.2 187.0 H1799.2"/><path d="M1794.2 178.1 H1799.2"/><path d="M1794.2 169.1 H1799.2"/><path d="M1794.2 160.1 H1801.7"/><path d="M1794.2 151.1 H1799.2"/><path d="M1794.2 142.1 H1799.2"/><path d="M1794.2 133.2 H1799.2"/><path d="M1794.2 124.2 H1799.2"/><path d="M1794.2 115.2 H1801.7"/><path d="M1794.2 106.2 H1799.2"/><path d="M1794.2 97.2 H1799.2"/><path d="M1794.2 88.3 H1799.2"/><path d="M1794.2 79.3 H1799.2"/><path d="M1794.2 70.3 H1801.7"/></g><path d="M907.3 519.0 H1531.7" stroke="#2fd42f" stroke-width="2.5"/><path d="M906.3 522.1 h9" stroke="#e08a20" stroke-width="3.9"/><path d="M1784.2 522.1 h10 M1795.0 512.3 v8" stroke="#e08a20" stroke-width="3.9" fill="none"/><path d="M1795.2 69.3 v8" stroke="#e08a20" stroke-width="1.6"/><g font-family="Liberation Sans,sans-serif" font-size="12" fill="#b4b4b4"><text x="906.8" y="548" text-anchor="middle">0s</text><text x="995.5" y="548" text-anchor="middle">2s</text><text x="1084.2" y="548" text-anchor="middle">4s</text><text x="1172.9" y="548" text-anchor="middle">6s</text><text x="1261.6" y="548" text-anchor="middle">8s</text><text x="1350.2" y="548" text-anchor="middle">10s</text><text x="1438.9" y="548" text-anchor="middle">12s</text><text x="1527.6" y="548" text-anchor="middle">14s</text><text x="1616.3" y="548" text-anchor="middle">16s</text><text x="1705.0" y="548" text-anchor="middle">18s</text><text x="1793.7" y="548" text-anchor="middle">20s</text><text x="1807.3" y="524.3" font-size="12.4">0mA</text><text x="1807.3" y="479.4" font-size="12.4">1mA</text><text x="1807.3" y="434.5" font-size="12.4">2mA</text><text x="1807.3" y="389.6" font-size="12.4">3mA</text><text x="1807.3" y="344.7" font-size="12.4">4mA</text><text x="1807.3" y="299.8" font-size="12.4">5mA</text><text x="1807.3" y="254.9" font-size="12.4">6mA</text><text x="1807.3" y="210.0" font-size="12.4">7mA</text><text x="1807.3" y="165.1" font-size="12.4">8mA</text><text x="1807.3" y="120.2" font-size="12.4">9mA</text><text x="1807.3" y="75.3" font-size="12.4">10mA</text></g></svg>
<div class="gb" style="left:903px;top:575px;width:454px;height:86.5px"></div>
<div class="gt" style="left:908px;top:574px">测量</div>
<div class="t" style="left:908.5px;top:590px;font-size:12px;color:#f4f4f4">标尺</div>
<div class="ecmb" style="left:910px;top:598px;width:46px;height:19px;font-size:9.5px"><span style="left:3px">None</span><b style="right:5px"></b></div>
<div class="t" style="left:970px;top:590.5px;font-size:11.5px;color:#f4f4f4;letter-spacing:0.9px;-webkit-text-stroke:0.35px #f4f4f4">Avg:</div>
<div class="t" style="left:970px;top:616.5px;font-size:11.5px;color:#f4f4f4;letter-spacing:0.9px;-webkit-text-stroke:0.35px #f4f4f4">X1:</div>
<div class="t" style="left:970px;top:642.3px;font-size:11.5px;color:#f4f4f4;letter-spacing:0.9px;-webkit-text-stroke:0.35px #f4f4f4">Y1:</div>
<div class="t" style="left:1098px;top:590.5px;font-size:11.5px;color:#f4f4f4;letter-spacing:0.9px;-webkit-text-stroke:0.35px #f4f4f4">Max:</div>
<div class="t" style="left:1098px;top:616.5px;font-size:11.5px;color:#f4f4f4;letter-spacing:0.9px;-webkit-text-stroke:0.35px #f4f4f4">X2:</div>
<div class="t" style="left:1098px;top:642.3px;font-size:11.5px;color:#f4f4f4;letter-spacing:0.9px;-webkit-text-stroke:0.35px #f4f4f4">Y2:</div>
<div class="t" style="left:1224px;top:590.5px;font-size:11.5px;color:#f4f4f4;letter-spacing:0.9px;-webkit-text-stroke:0.35px #f4f4f4">Min:</div>
<div class="t" style="left:1224px;top:616.5px;font-size:11.5px;color:#f4f4f4;letter-spacing:0.9px;-webkit-text-stroke:0.35px #f4f4f4">ΔX:</div>
<div class="t" style="left:1224px;top:642.3px;font-size:11.5px;color:#f4f4f4;letter-spacing:0.9px;-webkit-text-stroke:0.35px #f4f4f4">ΔY:</div>
<div class="gb" style="left:1374px;top:575px;width:287.5px;height:87px"></div>
<div class="gt" style="left:1380px;top:574px">坐标</div>
<div class="t" style="left:1381px;top:588.3px;font-size:12px;color:#f4f4f4">X-时间</div>
<div class="t" style="left:1381px;top:627.8px;font-size:12px;color:#f4f4f4">Y-电流</div>
<div class="t" style="left:1458px;top:588.3px;font-size:12px;color:#f4f4f4">范围</div>
<div class="t" style="left:1458px;top:627.8px;font-size:12px;color:#f4f4f4">幅值</div>
<div class="ecmb" style="left:1381.5px;top:598px;width:59.5px;height:19px;font-size:9.5px"><span>s</span><b></b></div>
<div class="ecmb" style="left:1381.5px;top:638.5px;width:59.5px;height:19px;font-size:9.5px"><span style="left:3px">mA</span><b></b></div>
<div class="wcmb" style="left:1459.5px;top:598px;width:60.5px;height:19px"><u></u><span>20</span><b></b></div>
<div class="wcmb" style="left:1459.5px;top:638.5px;width:60.5px;height:19px"><u></u><span>10</span><b></b></div>
<div class="ck" style="left:1541px;top:583.7px"></div>
<svg style="left:1541px;top:583.7px" width="12" height="12" viewBox="0 0 12 12"><path d="M2.6 6 L4.9 8.6 L9.5 2.8" fill="none" stroke="#0a0a3a" stroke-width="1.9"/></svg>
<div class="t" style="left:1557.5px;top:589.7px;font-size:11.5px;color:#f4f4f4">网格</div>
<div class="ck" style="left:1541px;top:602.8px"></div>
<div class="t" style="left:1557.5px;top:608.8px;font-size:11.5px;color:#f4f4f4">触发</div>
<div class="ck" style="left:1541px;top:622.8px"></div>
<div class="t" style="left:1557.5px;top:628.8px;font-size:11.5px;color:#f4f4f4">电压波形</div>
<div class="ck" style="left:1541px;top:643.2px"></div>
<div class="t" style="left:1557.5px;top:649.2px;font-size:11.5px;color:#f4f4f4">自动调整</div>
<div class="a" style="left:1589px;top:598.5px;width:46px;height:17.5px;background:#fff"></div>
<div class="t" style="left:1637.5px;top:608.5px;font-size:11.5px;color:#f4f4f4">mA</div>
<div class="gb" style="left:1666.5px;top:575px;width:172.5px;height:85px"></div>
<div class="gt" style="left:1673px;top:573.5px;letter-spacing:0.8px">保存/回放</div>
<div class="ck dis" style="left:1676px;top:593.5px;border-color:#fff"></div>
<div class="t" style="left:1692px;top:599.5px;font-size:11.5px;color:#6c6c6c">实时保存</div>
<div class="gbtn" style="left:1758px;top:585px;width:71px;height:26px"><span>回放波形</span></div>
<div class="gbtn" style="left:1677px;top:624.5px;width:71px;height:26px"><span>保存图片</span></div>
<div class="gbtn" style="left:1758px;top:624.5px;width:71px;height:26px"><span>保存波形</span></div>
<div class="gb" style="left:903px;top:673.5px;width:936px;height:25px"></div>
<div class="a" style="left:913.5px;top:681.5px;width:13px;height:13px;border-radius:50%;background:radial-gradient(circle,#8fb4dc 0%,#8fb4dc 30%,#fff 36%,#fff 100%);box-shadow:0 0 0 0.6px #cfe0f5"></div>
<div class="t" style="left:936.5px;top:688.3px;font-size:11.5px;color:#f4f4f4">连接状态:</div>
<div class="t" style="left:1001px;top:688.3px;font-size:12.1px;color:#2bd12b">PowerMini已连接</div>
<div class="t" style="left:1168px;top:686.5px;font-size:13.3px;color:#2bd12b;font-style:italic">www.egteks.com</div>
<div class="t" style="left:1681.5px;top:688.3px;font-size:11.7px;color:#f4f4f4">mPower版本：1.1.1</div>
<!-- p4_photo -->
<div class="a" style="left:701px;top:707px;width:488px;height:327px;background:#392d2a"></div>
<div class="a" style="left:701px;top:707px;width:1144px;height:5px;background:#2b2624"></div>
<svg style="left:0;top:0" width="1860" height="1034" viewBox="0 0 1860 1034"><path d="M701 706.5 H958 C930 716 880 727 818 727 C770 727 730 722.5 701 716 Z" fill="#1797ec"/><path d="M701 716 C730 722.5 770 727 818 727 C880 727 930 716 958 706.5" fill="none" stroke="#123a5e" stroke-width="1.2" opacity=".6"/></svg>
<div class="a" style="left:1188px;top:712px;width:672px;height:322px;background:#000"></div>
<div class="a" style="left:1845px;top:29px;width:15px;height:1005px;background:#000"></div>
<svg style="left:1200px;top:846px" width="24" height="56" viewBox="1200 846 24 56"><g fill="none" stroke="#f4f4f4" stroke-width="1.5"><path d="M1213 862.5 H1202.6 V850.2 H1220.6 V858.5"/><circle cx="1216.8" cy="862.9" r="3.5"/><path d="M1214.4 860.5 L1219.2 865.3"/><path d="M1212.5 893.2 A5.8 5.8 0 1 1 1214 886.5"/><path d="M1208.3 882.5 V880.8 M1205.8 880.6 H1210.8 M1208.3 885.2 V888.8 M1213 883.3 L1214.4 881.8"/><circle cx="1216.8" cy="895.2" r="3.5"/><path d="M1214.4 892.8 L1219.2 897.6"/></g><text x="1204" y="858.9" font-size="6.3" font-weight="700" fill="#f4f4f4" font-family="Liberation Sans,sans-serif">HDR</text></svg>
<div class="a" style="left:1816.5px;top:838px;width:28.5px;height:70px;overflow:hidden"><div style="position:absolute;left:0;top:0;width:70px;height:70px;border-radius:50%;background:radial-gradient(circle,#ffffff 0%,#ffffff 86%,#d8d8d8 92%,#f4f4f4 100%)"></div><div style="position:absolute;left:22.5px;top:28.5px;width:8px;height:14px;border:1.6px solid #111"></div></div>
<svg style="left:1836px;top:745px" width="10" height="260" viewBox="1836 745 10 260"><g fill="none" stroke="#e8e8e8" stroke-width="1.3"><path d="M1845 785.5 H1841 V794.5 H1845"/><path d="M1845 945 H1842 V967 H1845"/></g><path d="M1842.5 753 l1.5 -2 l1.5 2 Z M1842.5 994 l1.5 2 l1.5 -2 Z" fill="#ddd"/></svg>
<svg style="left:1235px;top:712px;overflow:hidden" width="573" height="322" viewBox="1235 712 573 322"><defs><linearGradient id="wood" gradientUnits="userSpaceOnUse" x1="1235" y1="712" x2="1294.8" y2="1111.0"><stop offset="0.0000" stop-color="#e6bf72"/><stop offset="0.1177" stop-color="#e7c074"/><stop offset="0.1324" stop-color="#f0d69a"/><stop offset="0.1471" stop-color="#e2b968"/><stop offset="0.1961" stop-color="#dbb05c"/><stop offset="0.2893" stop-color="#d9ad58"/><stop offset="0.3040" stop-color="#e3bb6a"/><stop offset="0.4045" stop-color="#e1b866"/><stop offset="0.4314" stop-color="#d4a650"/><stop offset="0.5785" stop-color="#d0a24c"/><stop offset="0.5932" stop-color="#dfb868"/><stop offset="0.6667" stop-color="#dcb464"/><stop offset="0.6815" stop-color="#d4a955"/><stop offset="0.7648" stop-color="#d3a854"/><stop offset="0.7795" stop-color="#e9d08e"/><stop offset="0.8825" stop-color="#e6c984"/><stop offset="1.0001" stop-color="#e0b862"/></linearGradient><radialGradient id="pad" cx="0.62" cy="0.45" r="0.6"><stop offset="0" stop-color="#77828a"/><stop offset="0.35" stop-color="#465a7a"/><stop offset="0.7" stop-color="#33425f"/><stop offset="1" stop-color="#2a3248"/></radialGradient><linearGradient id="warm" gradientUnits="userSpaceOnUse" x1="1380" y1="0" x2="1808" y2="0"><stop offset="0" stop-color="#dca848" stop-opacity="0"/><stop offset="1" stop-color="#dca848" stop-opacity=".5"/></linearGradient><filter id="bl"><feGaussianBlur stdDeviation="0.7"/></filter><filter id="bl2"><feGaussianBlur stdDeviation="6"/></filter></defs><rect x="1235" y="712" width="573" height="322" fill="url(#wood)"/><rect x="1235" y="712" width="573" height="322" fill="url(#warm)"/><rect x="1235" y="712" width="11" height="41" fill="#8d8d8f"/><path d="M1235 753 H1244 L1243 872 H1235 Z" fill="#8a4a22"/><path d="M1235 870 H1241 L1240 1034 H1235 Z" fill="#351708"/><path d="M1241 870 H1243.5 L1242 1034 H1240 Z" fill="#7a4520" opacity=".8"/><ellipse cx="1424" cy="1024" rx="34" ry="24" fill="#8a6a30" opacity=".65" filter="url(#bl2)"/><g filter="url(#bl)"><path d="M1603.5 712 H1808 V799 L1768 804 L1668 827 Q1658 830 1655 822 Z" fill="#4c5d80"/><path d="M1603.5 712 H1660 L1700 760 L1720 818 L1668 827 Q1658 830 1655 822 Z" fill="#56688a" opacity=".6"/><path d="M1640 712 L1662 716 Q1690 750 1708 790 L1722 816 L1668 827 Q1658 830 1656 822 L1648 800 Q1660 770 1646 730 Z" fill="#353650" opacity=".92"/><path d="M1668 752 Q1700 742 1730 752 Q1760 758 1780 742 Q1796 728 1808 718 V748 Q1790 756 1776 768 Q1750 780 1720 774 Q1690 768 1676 772 Z" fill="#a8a684" opacity=".55"/><path d="M1686 774 Q1720 782 1752 776 Q1785 766 1808 752 V786 Q1770 790 1740 800 L1716 806 Z" fill="#3f58a0" opacity=".5"/><path d="M1760 712 H1808 V722 Q1790 730 1778 744 Q1768 730 1760 712 Z" fill="#3f5cae" opacity=".7"/><path d="M1610 722 Q1630 740 1640 770 L1650 800 L1640 790 L1612 730 Z" fill="#3b62a8" opacity=".55"/><path d="M1735 790 Q1770 780 1808 778 V799 L1768 804 L1730 812 Z" fill="#3a4260" opacity=".8"/><path d="M1632 712 H1680 L1690 734 Q1670 730 1650 722 Z" fill="#23232e"/><path d="M1712 716 Q1740 712 1752 730 Q1760 748 1742 754 Q1722 756 1716 742 Z" fill="#1a1e24"/><path d="M1670 712 H1697 L1703 742 Q1702 750 1696 748 Q1690 744 1684 732 Z" fill="#d6a48c"/><path d="M1692 712 H1716 L1720 750 Q1718 758 1712 756 Q1706 752 1702 738 Z" fill="#dcae96"/><path d="M1714 712 H1757 Q1758 726 1754 732 Q1750 738 1744 736 Q1736 730 1726 718 Z" fill="#dba890"/><path d="M1745 728 q5 -1 7 3 q-1 5 -6 5 q-3 -3 -1 -8 Z" fill="#eec4b4"/><path d="M1696 714 L1703 744 M1716 714 L1720 750" stroke="#a87058" stroke-width="1.2" fill="none" opacity=".7"/><g fill="none" stroke="#1a1714" stroke-width="2.8"><path d="M1808 768 Q1770 772 1751 790 Q1730 812 1731 835 Q1732 862 1752 876 Q1775 888 1808 888"/><path d="M1808 794 Q1770 800 1745 816 Q1722 834 1724 852 Q1728 872 1755 888 Q1785 904 1808 910"/><path d="M1805 812 Q1796 860 1800 918"/><path d="M1808 895 Q1775 896 1762 905 Q1754 914 1760 928 Q1772 952 1790 985 L1808 1000"/><path d="M1808 815 Q1790 822 1786 845 Q1786 868 1808 876" stroke-width="2.2"/></g><path d="M1714 817 Q1704 850 1707 878 Q1714 905 1730 918 Q1745 930 1752 925" fill="none" stroke="#6a5a40" stroke-width="1.8" opacity=".75"/><path d="M1530 746 Q1590 770 1650 824 Q1672 842 1690 852 Q1735 878 1792 908 L1808 915" fill="none" stroke="#1b1714" stroke-width="2.6"/><path d="M1512 756 Q1560 742 1600 731 Q1650 722 1655 765 Q1655 800 1632 832 Q1625 842 1660 840 Q1700 840 1725 852 Q1750 866 1768 878 Q1785 885 1808 883" fill="none" stroke="#eeeef0" stroke-width="3.2"/><path d="M1628 838 Q1612 860 1640 856 Q1690 850 1720 870" fill="none" stroke="#9a8a6a" stroke-width="1.6" opacity=".7"/><path d="M1511 752 l16 -4 l2 7 l-16 4 Z" fill="#f3f3f3"/><path d="M1465 757 L1509 748 L1514 768 L1470 777 Z" fill="#2a6a9c"/><path d="M1474 760 l6 -1 l2 9 l-6 1 Z M1488 758 l6 -1 l1.5 7 l-6 1 Z" fill="#163a5c"/><path d="M1498 753 l6 -1.3 l2.5 10 l-6 1.3 Z" fill="#3fae6a"/><path d="M1391 775 L1410 772 L1413 780 L1394 783 Z" fill="#2a4a88"/><g fill="none" stroke-width="1.2"><path d="M1408 772 Q1412 740 1440 728 Q1445 716 1448 712" stroke="#6a78a8"/><path d="M1411 774 Q1416 742 1444 730 Q1452 720 1458 716 Q1470 730 1474 756" stroke="#7a7890"/><path d="M1414 776 Q1420 748 1450 746 L1458 750" stroke="#c0522a"/><path d="M1472 722 Q1500 725 1508 748" stroke="#5a68a0"/><path d="M1452 716 Q1468 740 1470 756" stroke="#8a8aa0"/></g><circle cx="1457" cy="776" r="3" fill="#9a7a5a"/><path d="M1487 810 Q1420 805 1405 850 Q1392 890 1407 900 Q1430 935 1448 975 Q1456 1000 1454 1034" fill="none" stroke="#1d1b18" stroke-width="4.2"/><path d="M1482 806 L1522 815 L1524 822 L1508 824 Q1495 826 1490 820 L1481 814 Z" fill="#18181a"/><path d="M1492 818 Q1515 814 1530 820 L1528 824 Q1512 828 1494 826 Z" fill="#1c1c1e"/><rect x="1526" y="829" width="5" height="13" rx="2" fill="#222" transform="rotate(-5 1528 835)"/><path d="M1480 849 Q1420 845 1400 868 Q1388 885 1396 905 Q1404 925 1432 940 Q1462 962 1465 1005 L1460 1034" fill="none" stroke="#e4532f" stroke-width="4.4"/><path d="M1478 846 L1522 848 L1530 853 L1520 858 L1506 866 Q1498 872 1496 866 L1500 857 L1478 853 Z" fill="#e44a2c"/><path d="M1522 850 l10 1 v4 l-10 1 Z" fill="#b8b0a8"/><path d="M1272 1034 Q1320 1020 1361 1005 Q1392 990 1388 955 Q1384 915 1374 895 Q1362 876 1320 874 Q1285 876 1277 893 Q1270 920 1278 942 Q1300 965 1361 1005 Q1400 996 1440 998 Q1480 1000 1505 992 Q1525 985 1532 960 Q1536 948 1528 940" fill="none" stroke="#231d16" stroke-width="1.7"/><path d="M1462 897 L1593 925" stroke="#2a2a2a" stroke-width="2.6"/><path d="M1458 916 L1490 918" stroke="#2a2a2a" stroke-width="2"/><path d="M1533 913 L1593 925" stroke="#333" stroke-width="3.2"/><path d="M1485 914 L1532 910.5 L1534 938 L1487 942 Z" fill="#33363a"/><path d="M1491 918.5 L1529 915.5 L1530 933 L1492 936.5 Z" fill="#d7ddd6"/><text x="1501" y="934.5" font-size="20.5" font-weight="700" fill="#0c0c0c" font-family="Liberation Sans,sans-serif" textLength="25" lengthAdjust="spacingAndGlyphs" transform="rotate(-4 1510 927)">18.8</text><path d="M1610 929.5 Q1607 929.5 1608 933 L1614 1001 Q1615 1006.5 1621 1006 L1764 994.5 Q1769 994 1768 989 L1748 925 Q1747 921.5 1742 922 Z" fill="#17171b"/><path d="M1608 933 L1614 1001 Q1615 1006.5 1621 1006 L1630 1005 L1618 931 Z" fill="#0b0b0d"/><path d="M1642 927 L1657.5 1000.5" stroke="#c8c8cc" stroke-width="1"/><path d="M1722 929 L1748 926.5 L1753 942 L1727 945 Z" fill="#f0d8d8"/><path d="M1725.5 932 L1746 930 L1749 939.5 L1729 942 Z" fill="none" stroke="#d8485a" stroke-width="1.2"/><g fill="none" stroke="#c8c8c8" stroke-width="0.8"><circle cx="1628" cy="950" r="3"/><circle cx="1632.5" cy="976" r="3"/><path d="M1616 941 h8 q3 0 3 4 M1628 953 v5 h-9 M1621 964 h8 q3 0 3.5 5 M1633 979 v6 h-9"/></g><text x="0" y="0" font-size="7.5" font-weight="700" font-style="italic" fill="#c9c9cf" font-family="Liberation Sans,sans-serif" transform="translate(1752 981) rotate(175)">EGTEKS</text><text x="0" y="0" font-size="3.6" fill="#a9a9af" font-family="Liberation Sans,sans-serif" transform="translate(1722 987) rotate(175)">ePower1221 series</text><path d="M1759 946 L1772 944 L1775 957 L1762 959 Z" fill="#121214"/><path d="M1748 944 l10 -1.5 l2 6 l-10 1.5 Z" fill="#2b3a8a"/><path d="M1774 952 Q1790 952 1808 954.5" fill="none" stroke="#1a1a1c" stroke-width="3"/><path d="M1766 985 Q1774 982 1790 982 L1808 980" fill="none" stroke="#1a1a1c" stroke-width="4.5"/><path d="M1790 981.5 L1808 980" stroke="#1a1a1c" stroke-width="2.6"/><path d="M1613 943 Q1580 942 1566 946 Q1530 958 1512 990 Q1500 1010 1492 1034" fill="none" stroke="#e2492a" stroke-width="5"/><path d="M1616 967 Q1590 966 1574 970 Q1540 978 1520 1000 Q1508 1015 1503 1034" fill="none" stroke="#1c1c1c" stroke-width="4"/><path d="M1585 967.5 L1614 966" stroke="#111" stroke-width="6.5"/><path d="M1568 945.5 Q1590 942 1613 943" fill="none" stroke="#e2492a" stroke-width="7.5"/></g></svg>
</body></html>
